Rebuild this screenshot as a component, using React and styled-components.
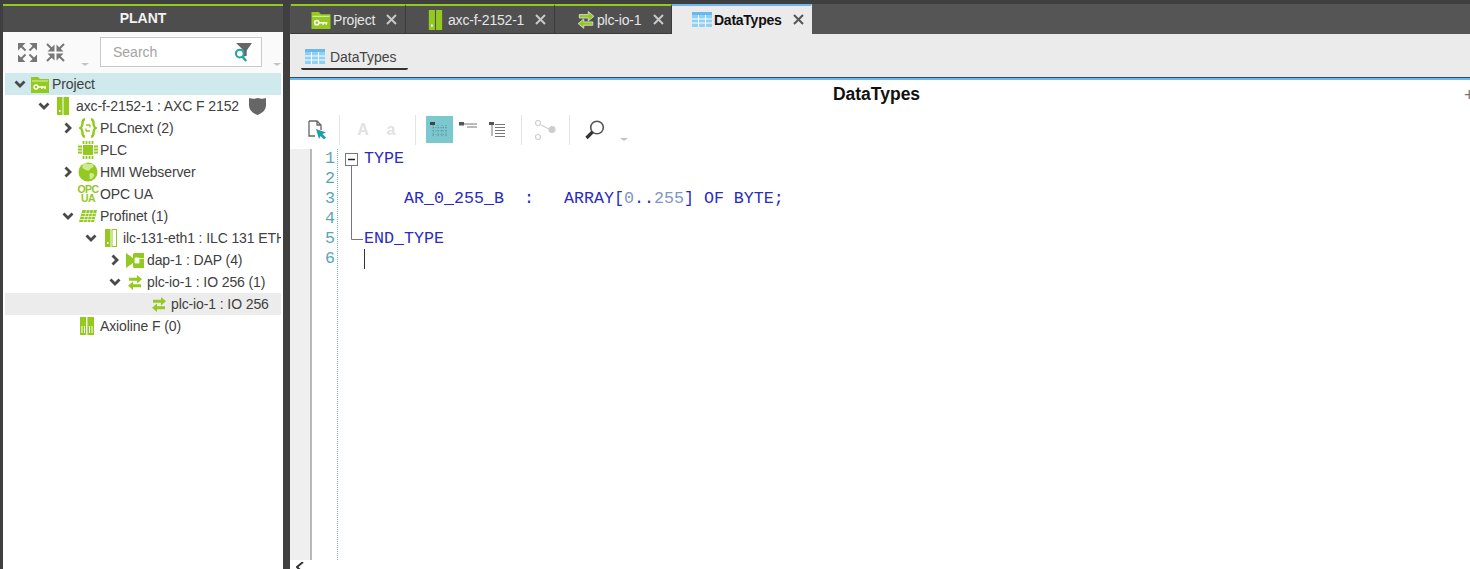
import React from "react";
import styled, { createGlobalStyle } from "styled-components";

const G = "#94c91f";
const Global = createGlobalStyle`
  html, body { margin: 0; padding: 0; height: 100%; overflow: hidden; background: #3f3f3f; }
  body { font-family: "Liberation Sans", Arial, sans-serif; }
`;
const Page = styled.div`display:flex;width:1470px;height:569px;padding-top:4px;box-sizing:border-box;background:#3f3f3f;overflow:hidden;`;
const Sidebar = styled.aside`width:280px;margin-left:3px;flex:none;display:flex;flex-direction:column;background:#fff;border-top:2px solid ${G};box-sizing:border-box;`;
const SideHead = styled.div`height:26px;background:#4d4d4d;color:#f2f2f2;font-weight:700;font-size:14px;display:flex;align-items:center;justify-content:center;padding-bottom:2px;box-sizing:border-box;`;
const SideTools = styled.div`height:41px;background:#fafafa;display:flex;align-items:flex-start;padding:5px 0 0 10px;box-sizing:border-box;`;
const SquareBtn = styled.button`width:28px;height:30px;flex:none;border:0;padding:0;background:none;display:flex;align-items:center;justify-content:center;`;
const Caret = styled.span`width:0;height:0;border-left:4px solid transparent;border-right:4px solid transparent;border-top:3px solid #c4c4c4;margin:${p=>p.$m};flex:none;`;
const SearchBox = styled.div`width:162px;height:30px;flex:none;box-sizing:border-box;border:1px solid #c9c9c9;background:#fff;display:flex;align-items:center;justify-content:space-between;padding:0 9px 0 12px;font-size:14px;color:#a3a3a3;`;
const Tree = styled.div`padding:0 2px;overflow:hidden;flex:1;`;
const Row = styled.div`height:22px;display:flex;align-items:center;padding-left:${p=>p.$depth*24-(p.$depth>2?1:0)}px;font-size:14px;letter-spacing:-.11px;color:#404040;white-space:nowrap;overflow:hidden;background:${p=>p.$sel?"#cfe9ec":p.$hover?"#ececec":"transparent"};`;
const ChevSlot = styled.span`width:23px;flex:none;display:flex;justify-content:center;align-items:center;padding-left:7px;box-sizing:border-box;`;
const IconSlot = styled.span`width:24px;flex:none;display:flex;justify-content:center;align-items:center;padding-right:${p=>p.$pr||0}px;box-sizing:border-box;`;
const Shield = styled.span`margin-left:10px;display:flex;`;

const Main = styled.main`margin-left:7px;flex:1;min-width:0;display:flex;flex-direction:column;background:#fff;position:relative;`;
const TabBar = styled.div`height:30px;display:flex;background:#555;flex:none;padding-left:1px;box-sizing:border-box;`;
const Tab = styled.div`width:${p=>p.$w}px;height:30px;box-sizing:border-box;flex:none;display:flex;align-items:center;border-top:2px solid ${p=>p.$active?"#6cb8ec":G};background:${p=>p.$active?"#ebebeb":"#505050"};border-right:1px solid ${p=>p.$active?"transparent":"#3a3a3a"};border-bottom:1px solid ${p=>p.$active?"#ebebeb":"#3a3a3a"};padding-left:${p=>p.$pl}px;font-size:14px;color:${p=>p.$active?"#111":"#e6e6e6"};font-weight:${p=>p.$active?700:400};`;
const TabLabel = styled.span`margin-left:${p=>p.$ml}px;letter-spacing:${p=>p.$active?"-0.25px":"-0.2px"};`;
const TabClose = styled.span`margin-left:${p=>p.$ml}px;display:flex;`;
const SubBar = styled.div`height:43px;background:#ebebeb;flex:none;padding:0 0 0 11px;box-sizing:border-box;display:flex;`;
const SubTab = styled.div`width:107px;height:36px;box-sizing:border-box;border-bottom:2px solid #333;border-radius:0 0 2px 2px;display:flex;align-items:center;gap:5px;padding:11px 0 0 4px;font-size:14px;letter-spacing:-.05px;color:#444;`;
const BlueRule = styled.div`height:3px;flex:none;background:#6cb8ec;border-top:1px solid #2f4f66;box-sizing:border-box;`;
const Title = styled.div`height:30px;flex:none;display:flex;align-items:center;justify-content:center;font-weight:700;font-size:17.5px;color:#111;padding:0 7px 2px 0;box-sizing:border-box;position:relative;`;
const Plus = styled.span`position:absolute;left:1174px;top:6px;font-size:18px;color:#777;font-weight:400;line-height:18px;`;
const Toolbar = styled.div`height:39px;flex:none;display:flex;align-items:center;padding:0 0 0 14px;box-sizing:border-box;`;
const Tool = styled.span`width:${p=>p.$w}px;height:27px;flex:none;display:flex;align-items:center;justify-content:center;padding-bottom:${p=>p.$pb||0}px;box-sizing:border-box;background:${p=>p.$on?"#7cc8cf":"transparent"};font-size:16px;font-weight:700;color:#e2e2e2;`;
const Sep = styled.span`width:1px;height:30px;background:#e4e4e4;flex:none;margin:0 ${p=>p.$r}px 0 ${p=>p.$l}px;`;
const Editor = styled.div`flex:none;height:411px;display:flex;`;
const Margin = styled.div`width:20px;background:#efefef;border-right:2px solid #b9b9b9;flex:none;`;
const Nums = styled.div`width:23px;flex:none;padding-right:2px;border-right:1px dotted #8ab8c8;font:16.67px/20px "Liberation Mono",monospace;color:#5aa5b5;text-align:right;`;
const Fold = styled.div`width:26px;flex:none;`;
const Code = styled.pre`margin:0;font:16.67px/20px "Liberation Mono","Courier New",monospace;color:#2a2ac0;flex:1;`;
const Num = styled.span`color:#7f96c8;`;
const Cursor = styled.span`display:inline-block;width:1px;height:20px;background:#333;vertical-align:top;`;
const Scroll = styled.div`padding:2px 0 0 6px;display:flex;`;

const Chev = ({open}) => (
  <svg width="12" height="12" viewBox="0 0 12 12">
    <path d={open?"M1.500 3.500 6 8l4.500-4.500":"M3.500 1.500 8 6l-4.500 4.500"} fill="none" stroke="#4a4a4a" strokeWidth="2.800"/>
  </svg>
);
const Folder = ({w=18,h=17}) => (
  <svg width={w} height={h} viewBox="0 0 18 17">
    <path d="M0 1h7l2 2h9v14H0z" fill={G}/>
    <path d="M1 5h16" stroke="#dff0ae" strokeWidth="1"/>
    <rect x="1.500" y="6.500" width="15" height="9" fill={G}/>
    <circle cx="5" cy="11" r="2" fill="none" stroke="#fff" strokeWidth="1.400"/>
    <path d="M7 11h8M11 11v2M14 11v2" stroke="#fff" strokeWidth="1.400"/>
  </svg>
);
const Device = ({w=12,h=18,solid}) => (
  <svg width={w} height={h} viewBox="0 0 12 18">
    <rect x="0" y="0" width="5.500" height="18" fill={G}/>
    <rect x="2" y="13" width="1.500" height="2" fill="#fff"/>
    <rect x="7" y=".5" width="4.500" height="17" fill={solid?G:"#fff"} stroke={G}/>
  </svg>
);
const PlcNext = () => (
  <svg width="18" height="20" viewBox="0 0 18 20">
    <path d="M6 1.300C3 1.600 3.600 4.500 3.300 6.800 3 9 1.300 10 1.300 10s1.700 1 2 3.200c.3 2.300-.3 5.200 2.700 5.500M12 1.300c3 .3 2.400 3.200 2.700 5.500.3 2.200 2 3.200 2 3.200s-1.700 1-2 3.200c-.3 2.300.3 5.200-2.700 5.500" fill="none" stroke={G} strokeWidth="2.400"/>
    <path d="M7 7h4M11 7v2.500M7 13h4M7 10.500V13" stroke={G} strokeWidth="1.300" fill="none"/>
  </svg>
);
const Chip = () => (
  <svg width="20" height="20" viewBox="0 0 20 20">
    <rect x="5" y="5" width="10" height="10" fill={G}/>
    <path d="M5.500 1v3M8.500 1v3M11.500 1v3M14.500 1v3M5.500 16v3M8.500 16v3M11.500 16v3M14.500 16v3M0 6.500h4M0 9.500h4M0 12.500h4M16 6.500h4M16 9.500h4M16 12.500h4" stroke={G} strokeWidth="1.800"/>
  </svg>
);
const Globe = () => (
  <svg width="20" height="20" viewBox="0 0 20 20">
    <circle cx="10" cy="10" r="9.500" fill={G}/>
    <path d="M7 .8C10 3 13 1.500 15 2.500c1 1 .5 3-1.500 3.500-1.500.5-1 2-3 2.500C8 9 6 7 4.500 6 4 4 5 2 7 .8zM13 11c2 0 4 1 3 3s-3 4-4 3 0-2-.5-3 0-3 1.500-3z" fill="#d9eeaa" opacity=".85"/>
  </svg>
);
const OpcText = styled.span`display:flex;flex-direction:column;align-items:center;font-size:10.500px;font-weight:700;line-height:9px;color:${G};letter-spacing:-.6px;`;
const Profinet = () => (
  <svg width="18" height="12" viewBox="0 0 18 12">
    <path d="M3.500 0H18l-3 12H0z" fill={G}/>
    <path d="M2.700 3.500h14.500M1.800 6.500h14.500M1 9.500h14.500M7.500 0l-3 12M11 0l-3 12M14.500 0l-3 12" stroke="#fff" strokeWidth=".7"/>
  </svg>
);
const Dap = () => (
  <svg width="18" height="17" viewBox="0 0 18 17">
    <path d="M0 1l7 5V2.500C7 1.500 8 1 9 1h9v15H9c-1 0-2-.5-2-1.500V11l-7 5z" fill={G}/>
    <path d="M9 6h4v5H9zM13 6.500h5" fill="#fff" stroke="#fff" strokeWidth=".8"/>
  </svg>
);
const Swap = ({w=16,h=17,ring}) => (
  <svg width={w} height={h} viewBox="-1 -1 16 17">
    <path d="M14 4.200 9 0v2.700H1v3h8v2.700zM0 10.700 5 6.500v2.700h8v3H5v2.700z" fill={G} stroke={ring?"#e8e8e8":"none"} strokeWidth={ring?.7:0}/>
  </svg>
);
const Axio = () => (
  <svg width="14" height="18" viewBox="0 0 14 18">
    <rect width="6.200" height="18" fill={G}/><rect x="7.400" width="6.600" height="18" fill={G}/>
    <path d="M2 9v7M4.500 9v7M9.500 9v7M12 9v7" stroke="#fff" strokeWidth="1"/>
  </svg>
);
const ShieldIcon = () => (
  <svg width="17" height="18" viewBox="0 0 17 18">
    <path d="M0 1c3 1 5 1 8.500 0 3.500 1 5.500 1 8.500 0v7c0 5-3.500 8-8.500 10C3.500 16 0 13 0 8z" fill="#666"/>
  </svg>
);
const Expand = () => (
  <svg width="19" height="19" viewBox="0 0 19 19" fill="#777" stroke="none">
    <path d="M0 0h7.500L0 7.500zM19 0v7.500L11.500 0zM0 19v-7.500L7.500 19zM19 19h-7.500l7.500-7.500z"/>
    <path d="M3 3l4.500 4.500M16 3l-4.500 4.500M3 16l4.500-4.500M16 16l-4.500-4.500" stroke="#777" strokeWidth="2"/>
  </svg>
);
const Collapse = () => (
  <svg width="19" height="19" viewBox="0 0 19 19" fill="#777">
    <path d="M8.500 8.500h-7l7-7zM10.500 8.500h7l-7-7zM8.500 10.500h-7l7 7zM10.500 10.500h7l-7 7z"/>
    <path d="M5.500 5.500 1 1M13.500 5.500 18 1M5.500 13.500 1 18M13.500 13.500 18 18" stroke="#777" strokeWidth="2"/>
  </svg>
);
const Funnel = () => (
  <svg width="18" height="20" viewBox="0 0 17 19">
    <path d="M2 1h15l-5 7v5l-3 1V8z" fill="#666"/>
    <circle cx="5.500" cy="11" r="3.700" fill="#fff" stroke="#1fa3a6" strokeWidth="1.900"/>
    <path d="M8 14l3.500 4" stroke="#1fa3a6" strokeWidth="2.200"/>
  </svg>
);
const Close = ({c}) => (
  <svg width="11" height="11" viewBox="0 0 11 11">
    <path d="M1 1l9 9M10 1l-9 9" stroke={c} strokeWidth="2"/>
  </svg>
);
const TableIcon = () => (
  <svg width="20" height="15" viewBox="0 0 20 15">
    <rect width="20" height="15" fill="#8fd0f5"/>
    <rect width="20" height="3" fill="#6cb8ec"/>
    <path d="M0 7h20M0 11h20M6.500 3v12M13.500 3v12" stroke="#fff" strokeWidth="1"/>
  </svg>
);
const DocCursor = () => (
  <svg width="19" height="20" viewBox="0 0 19 20">
    <path d="M1 1h8l4 4v5M1 1v15h6M9 1v4h4" fill="none" stroke="#666" strokeWidth="1.300"/>
    <path d="M8 9l10 3.500-3.500 1.500 3.500 3.500-2 2-3.500-3.500L11 19z" fill="#1f9fa6"/>
  </svg>
);
const TreeAll = () => (
  <svg width="19" height="16" viewBox="0 0 19 16">
    <rect x="0" y="0" width="5" height="3" fill="#444"/>
    <path d="M3 3v11M3 5.500h15M3 9h15M3 12.500h15M8 3v11M12 3v11M16 3v11" stroke="#4d6f72" strokeWidth=".8" strokeDasharray="1 1.500" fill="none" opacity=".75"/>
  </svg>
);
const TreeOne = () => (
  <svg width="18" height="6" viewBox="0 0 18 6">
    <rect width="5" height="3.500" fill="#555"/>
    <path d="M5 2h13M8 5h10" stroke="#777" strokeWidth="1"/>
  </svg>
);
const TreeList = () => (
  <svg width="16" height="15" viewBox="0 0 16 15">
    <rect width="5" height="3" fill="#555"/>
    <path d="M3 3v11M6 2.500h10M6 5.500h10M6 8.500h10M6 11.500h10M6 14.500h10" stroke="#777" strokeWidth="1"/>
  </svg>
);
const Nodes = () => (
  <svg width="22" height="20" viewBox="0 0 22 20" fill="none" stroke="#cfcfcf" strokeWidth="1.200">
    <circle cx="4" cy="3" r="2.500"/><circle cx="4" cy="17" r="2.500"/><circle cx="18" cy="9.500" r="3" fill="#ccc"/>
    <path d="M7 5l8 4"/>
  </svg>
);
const Magnifier = () => (
  <svg width="20" height="20" viewBox="0 0 20 20">
    <circle cx="12" cy="7.500" r="6.300" fill="#fff" stroke="#555" strokeWidth="1.600"/>
    <path d="M7.500 12 1.500 18" stroke="#333" strokeWidth="3.200"/>
  </svg>
);
const FoldMark = () => (
  <svg width="25" height="100" viewBox="0 0 25 100">
    <path d="M13.500 16V90.500H25" fill="none" stroke="#777" strokeWidth="1"/>
    <rect x="7.500" y="4.500" width="12" height="12" fill="#fff" stroke="#777"/>
    <path d="M10 10.500h7" stroke="#222" strokeWidth="1.500"/>
  </svg>
);
const Back = () => (
  <svg width="8" height="9" viewBox="0 0 8 9"><path d="M7 0 1 5l4 4" fill="none" stroke="#333" strokeWidth="2"/></svg>
);

const tree = [
  {d:0,open:true,icon:<Folder/>,label:"Project",sel:true},
  {d:1,open:true,icon:<Device solid/>,label:"axc-f-2152-1 : AXC F 2152",shield:true,pr:2},
  {d:2,open:false,icon:<PlcNext/>,label:"PLCnext (2)"},
  {d:2,icon:<Chip/>,label:"PLC"},
  {d:2,open:false,icon:<Globe/>,label:"HMI Webserver"},
  {d:2,icon:<OpcText><span>OPC</span><span>UA</span></OpcText>,label:"OPC UA"},
  {d:2,open:true,icon:<Profinet/>,label:"Profinet (1)"},
  {d:3,open:true,icon:<Device/>,label:"ilc-131-eth1 : ILC 131 ETH"},
  {d:4,open:false,icon:<Dap/>,label:"dap-1 : DAP (4)"},
  {d:4,open:true,icon:<Swap/>,label:"plc-io-1 : IO 256 (1)"},
  {d:5,icon:<Swap/>,label:"plc-io-1 : IO 256",hover:true},
  {d:2,icon:<Axio/>,label:"Axioline F (0)",pr:2},
];

export default function App() {
  return (
    <Page>
      <Global/>
      <Sidebar>
        <SideHead>PLANT</SideHead>
        <SideTools>
          <SquareBtn><Expand/></SquareBtn>
          <SquareBtn><Collapse/></SquareBtn>
          <Caret $m="26px 11px 0 12px"/>
          <SearchBox>Search<Funnel/></SearchBox>
          <Caret $m="26px 0 0 11px"/>
        </SideTools>
        <Tree>
          {tree.map((t,i)=>(
            <Row key={i} $depth={t.d} $sel={t.sel} $hover={t.hover}>
              <ChevSlot>{t.open!==undefined && <Chev open={t.open}/>}</ChevSlot>
              <IconSlot $pr={t.pr}>{t.icon}</IconSlot>
              <span>{t.label}</span>
              {t.shield && <Shield><ShieldIcon/></Shield>}
            </Row>
          ))}
        </Tree>
      </Sidebar>
      <Main>
        <TabBar>
          <Tab $w={115} $pl={20}><Folder w={20} h={18}/><TabLabel $ml={2}>Project</TabLabel><TabClose $ml={11}><Close c="#c9c9c9"/></TabClose></Tab>
          <Tab $w={149} $pl={22}><Device w={15} h={20} solid/><TabLabel $ml={5}>axc-f-2152-1</TabLabel><TabClose $ml={11}><Close c="#c9c9c9"/></TabClose></Tab>
          <Tab $w={117} $pl={22}><Swap w={18} h={20} ring/><TabLabel $ml={2}>plc-io-1</TabLabel><TabClose $ml={12}><Close c="#c9c9c9"/></TabClose></Tab>
          <Tab $w={140} $pl={20} $active><TableIcon/><TabLabel $ml={2} $active>DataTypes</TabLabel><TabClose $ml={11}><Close c="#555"/></TabClose></Tab>
        </TabBar>
        <SubBar><SubTab><TableIcon/>DataTypes</SubTab></SubBar>
        <BlueRule/>
        <Title>DataTypes<Plus>+</Plus></Title>
        <Toolbar>
          <Tool $w={26}><DocCursor/></Tool>
          <Sep $l={9} $r={9}/>
          <Tool $w={28}>A</Tool>
          <Tool $w={28}>a</Tool>
          <Sep $l={10} $r={10}/>
          <Tool $w={27} $on><TreeAll/></Tool>
          <Tool $w={29} $pb={10}><TreeOne/></Tool>
          <Tool $w={30}><TreeList/></Tool>
          <Sep $l={9} $r={0}/>
          <Tool $w={46}><Nodes/></Tool>
          <Sep $l={1} $r={0}/>
          <Tool $w={50}><Magnifier/></Tool>
          <Caret $m="20px 0 0 0"/>
        </Toolbar>
        <Editor>
          <Margin/>
          <Nums>{[1,2,3,4,5,6].map(n=><div key={n}>{n}</div>)}</Nums>
          <Fold><FoldMark/></Fold>
          <Code>{"TYPE\n\n    AR_0_255_B  :   ARRAY["}<Num>0</Num>{".."}<Num>255</Num>{"] OF BYTE;\n\nEND_TYPE\n"}<Cursor/></Code>
        </Editor>
        <Scroll><Back/></Scroll>
      </Main>
    </Page>
  );
}
